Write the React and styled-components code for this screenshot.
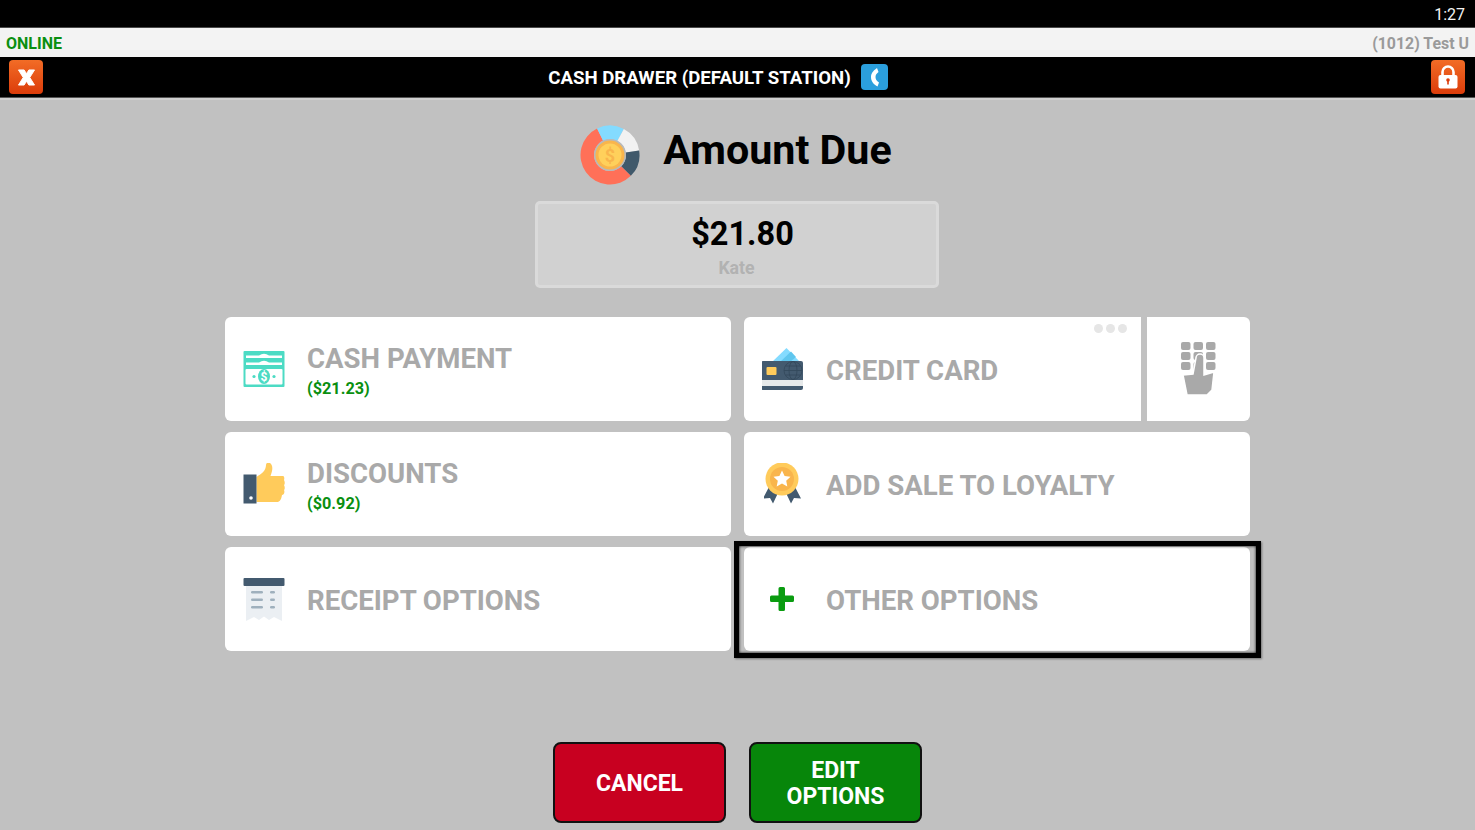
import React from 'react';
import styled, { createGlobalStyle } from 'styled-components';

const Global = createGlobalStyle`
  html, body { margin: 0; padding: 0; background: #c1c1c1; }
  * { box-sizing: border-box; }
  body { font-family: Roboto, "Liberation Sans", sans-serif; }
`;

const Page = styled.div`
  width: 1475px;
  height: 830px;
  overflow: hidden;
  display: flex;
  flex-direction: column;
  background: #c1c1c1;
`;
const StatusBar = styled.div`
  height: 28px;
  background: #000;
  border-bottom: 1px solid #4a4a4a;
  color: #f4f4f4;
  font-size: 16px;
  line-height: 29px;
  text-align: right;
  padding-right: 10px;
`;
const OnlineBar = styled.div`
  height: 29px;
  background: #f3f3f3;
  display: flex;
  align-items: center;
  justify-content: space-between;
  padding: 2px 6px 0;
  font-size: 16px;
  font-weight: 700;
`;
const Online = styled.span`
  color: #0a8f10;
`;
const User = styled.span`
  color: #9a9a9a;
  font-size: 15.9px;
`;
const TitleBar = styled.div`
  height: 41px;
  background: #000;
  border-bottom: 1px solid #555;
  display: flex;
  align-items: center;
  padding: 0 10px 0 9px;
`;
const SquareBtn = styled.div`
  width: 34px;
  height: 34px;
  border-radius: 4px;
  background: linear-gradient(#f26c26, #dc3c0a);
  display: flex;
  align-items: center;
  justify-content: center;
`;
const TitleCenter = styled.div`
  flex: 1;
  display: flex;
  align-items: center;
  justify-content: center;
  gap: 10px;
  padding-right: 38px;
  color: #fff;
  font-size: 18.65px;
  font-weight: 700;
`;
const TitleText = styled.span`
  padding-top: 2px;
`;
const Content = styled.main`
  flex: 1;
  display: flex;
  flex-direction: column;
  align-items: center;
  padding-top: 27px;
  background: linear-gradient(#cfcfcf 0 2px, #c1c1c1 2px);
`;
const Heading = styled.div`
  height: 59px;
  display: flex;
  align-items: center;
  gap: 23px;
  margin-right: 3px;
`;
const HeadingText = styled.h1`
  margin: 0 0 9px;
  font-size: 41.2px;
  font-weight: 700;
  color: #000;
  line-height: 50px;
  white-space: nowrap;
`;
const AmountBox = styled.div`
  margin-top: 17px;
  margin-right: 2px;
  width: 404px;
  height: 87px;
  border: 3px solid #dadada;
  border-radius: 5px;
  background: #d1d1d1;
  display: flex;
  flex-direction: column;
  align-items: center;
  padding-top: 9px;
`;
const Amount = styled.div`
  font-size: 32.5px;
  line-height: 42px;
  font-weight: 700;
  color: #000;
  padding-left: 12px;
`;
const Customer = styled.div`
  margin-top: 2px;
  font-size: 17.7px;
  line-height: 22px;
  font-weight: 700;
  color: #b2b2b2;
`;
const Grid = styled.div`
  margin-top: 29px;
  width: 1025px;
  display: grid;
  grid-template-columns: 506px 506px;
  grid-auto-rows: 103.5px;
  column-gap: 13px;
  row-gap: 11.5px;
`;
const Cell = styled.div`
  display: flex;
  gap: 6px;
`;
const Card = styled.div`
  position: relative;
  flex: 1;
  background: #fff;
  border-radius: ${(p) => p.$radius || '6px'};
  display: flex;
  align-items: center;
  padding-left: 18px;
  &::after {
    content: ${(p) => (p.$selected ? "''" : 'none')};
    position: absolute;
    inset: -6px -11px -7px -10px;
    border: 5px solid #000;
    box-shadow: inset 0 0 3px #000, 1px 1px 2px rgba(0, 0, 0, 0.4);
  }
`;
const KeypadCard = styled(Card)`
  flex: 0 0 103px;
  padding: 0 0 0 34px;
`;
const IconSlot = styled.div`
  width: 42px;
  height: 60px;
  margin-right: 22px;
  display: flex;
  align-items: center;
  justify-content: center;
  flex: none;
`;
const Labels = styled.div`
  display: flex;
  flex-direction: column;
  margin-top: ${(p) => (p.$sub ? '4px' : '5px')};
`;
const Label = styled.div`
  font-size: 27.6px;
  line-height: 34px;
  font-weight: 700;
  color: #a9a9a9;
  white-space: nowrap;
`;
const Sub = styled.div`
  margin-top: 3px;
  font-size: 16.3px;
  line-height: 20px;
  font-weight: 700;
  color: #0a8f10;
`;
const Dots = styled.div`
  position: absolute;
  top: 7px;
  right: 14px;
  display: flex;
  gap: 3px;
`;
const Dot = styled.span`
  width: 9px;
  height: 9px;
  border-radius: 50%;
  background: #e6e6e6;
`;
const Actions = styled.div`
  margin-top: 91px;
  display: flex;
  gap: 23px;
`;
const ActionButton = styled.button`
  width: 173px;
  height: 81px;
  border: 2px solid #111;
  border-radius: 8px;
  background: ${(p) => p.$bg};
  color: #fff;
  font-family: inherit;
  font-size: 23px;
  line-height: 26px;
  font-weight: 700;
  padding: 4px 20px 0;
`;

const XIcon = () => (
  <svg width="19" height="17" viewBox="0 0 20 18" aria-hidden="true">
    <path d="M1.500 1H7.500L10 5L12.500 1H18.500L13.500 9L18.500 17H12.500L10 13L7.500 17H1.500L6.500 9Z" fill="#fff" stroke="#fff" strokeLinejoin="round" />
  </svg>
);
const LockIcon = () => (
  <svg width="20" height="24" viewBox="0 0 20 24" aria-hidden="true">
    <path d="M4.500 11V7a5.500 5.500 0 0 1 11 0v4" fill="none" stroke="#fff" strokeWidth="2.600" />
    <rect x="0.500" y="10" width="19" height="13.500" rx="2" fill="#fff" />
    <circle cx="10" cy="15" r="1.800" fill="#dc3c0a" />
    <rect x="9.200" y="15" width="1.600" height="4.500" fill="#dc3c0a" />
  </svg>
);
const PhoneIcon = () => (
  <svg width="27" height="26" viewBox="0 0 27 26" aria-hidden="true">
    <rect width="27" height="26" rx="4" fill="#2b9fdd" />
    <path d="M16 4C11.500 7 10 10 10 13C10 17 12 20 16.500 22.500L18 18.500C15.500 17 14.500 15 14.500 13C14.500 11 15.500 9.500 17.500 8Z" fill="#fff" />
  </svg>
);

const polar = (r, deg) => {
  const a = ((deg - 90) * Math.PI) / 180;
  return [30 + r * Math.cos(a), 30 + r * Math.sin(a)];
};
const ringPath = (from, to, R, r) => {
  const [x1, y1] = polar(R, from);
  const [x2, y2] = polar(R, to);
  const [x3, y3] = polar(r, to);
  const [x4, y4] = polar(r, from);
  const large = to - from > 180 ? 1 : 0;
  return `M${x1} ${y1}A${R} ${R} 0 ${large} 1 ${x2} ${y2}L${x3} ${y3}A${r} ${r} 0 ${large} 0 ${x4} ${y4}Z`;
};
const DueIcon = () => (
  <svg width="60" height="60" viewBox="0 0 60 60" aria-hidden="true">
    <path d={ringPath(135, 334, 29.5, 16)} fill="#ff7058" />
    <path d={ringPath(-26, 28, 29.5, 16)} fill="#84dbff" />
    <path d={ringPath(28, 81, 29.5, 16)} fill="#f2f2f2" />
    <path d={ringPath(81, 135, 29.5, 16)} fill="#40596b" />
    <circle cx="30" cy="30" r="16" fill="#b9b9b9" />
    <circle cx="30" cy="30" r="14.5" fill="#f9b54c" />
    <circle cx="30" cy="30" r="11.5" fill="#ffd05b" />
    <text x="30" y="36.500" textAnchor="middle" fontSize="18" fontWeight="700" fill="#f9b54c" fontFamily="Roboto, sans-serif">$</text>
  </svg>
);
const CashIcon = () => (
  <svg width="42" height="36" viewBox="0 0 42 36" aria-hidden="true">
    <rect x="0.500" width="41" height="36" rx="1" fill="#4cdbc4" />
    <path d="M3 4.500H16Q21 1 26 4.500H39V7H3Z" fill="#fff" />
    <path d="M3 11.500H16Q21 8 26 11.500H39V14H3Z" fill="#fff" />
    <rect x="2.500" y="18" width="37" height="15.500" rx="1" fill="#fff" />
    <ellipse cx="21" cy="25.500" rx="6" ry="7.500" fill="#4cdbc4" />
    <text x="21" y="30" textAnchor="middle" fontSize="12" fontWeight="700" fill="#fff" fontFamily="Roboto, sans-serif">$</text>
    <circle cx="11" cy="25.500" r="1.600" fill="#4cdbc4" />
    <circle cx="31" cy="25.500" r="1.600" fill="#4cdbc4" />
  </svg>
);
const ThumbIcon = () => (
  <svg width="42" height="42" viewBox="0 1 42 42" aria-hidden="true">
    <path d="M13.500 15C18 12 23 9 23 3C23 1 25 0 27 1C30 3 30 8 27.500 14H40C41.500 14 41.500 17 41 18C42 20 42 22 41 23C42 25 42 27 41 28C42 30 41 33 39 33C38 39 36 40 34 40H13.500Z" fill="#ffcb5b" />
    <rect x="0.500" y="12.500" width="13" height="29" fill="#435a6f" />
    <circle cx="8" cy="36" r="1.800" fill="#fff" />
  </svg>
);
const ReceiptIcon = () => (
  <svg width="42" height="44" viewBox="0 -1 42 44" aria-hidden="true">
    <path d="M3 6H39V43L31 39L26 42L21 38.500L16 42L11 39L3 43Z" fill="#ebeff3" />
    <rect x="0.500" y="0" width="41" height="8" rx="1" fill="#435a6f" />
    <rect x="8" y="13" width="12" height="2.400" rx="1.200" fill="#9fb0bd" />
    <rect x="8" y="20.500" width="12" height="2.400" rx="1.200" fill="#9fb0bd" />
    <rect x="8" y="28" width="12" height="2.400" rx="1.200" fill="#9fb0bd" />
    <rect x="27" y="13" width="5" height="2.400" rx="1.200" fill="#9fb0bd" />
    <rect x="27" y="20.500" width="5" height="2.400" rx="1.200" fill="#9fb0bd" />
    <rect x="27" y="28" width="5" height="2.400" rx="1.200" fill="#9fb0bd" />
  </svg>
);
const CardIcon = () => (
  <svg width="42" height="42" viewBox="1 0 42 42" aria-hidden="true">
    <path d="M11 14L25.500 0L39 14Z" fill="#84dbff" />
    <path d="M19 14L30 3.500L35 9L29 14Z" fill="#5fc6ee" />
    <rect x="0" y="13" width="42" height="29" rx="2" fill="#435a6f" />
    <rect x="0" y="32" width="42" height="6" fill="#e6e9ea" />
    <rect x="5.500" y="19" width="10" height="8" rx="1" fill="#ffcb5b" />
    <circle cx="32" cy="22.500" r="9" fill="none" stroke="#32485a" strokeWidth="0.800" />
    <ellipse cx="32" cy="22.500" rx="4" ry="9" fill="none" stroke="#32485a" strokeWidth="0.800" />
    <path d="M23 22.500H41M24.500 18H39.500M24.500 27H39.500" stroke="#32485a" strokeWidth="0.800" />
  </svg>
);
const MedalIcon = () => (
  <svg width="38" height="42" viewBox="1 1 38 42" aria-hidden="true">
    <path d="M6 25L0 36.500L7 36L10 41.500L15 31Z" fill="#435a6f" />
    <path d="M32 25L38 36.500L31 36L28 41.500L23 31Z" fill="#435a6f" />
    <circle cx="19" cy="17" r="16.500" fill="#ffcb5b" />
    <circle cx="19" cy="17" r="12" fill="#f9b54c" />
    <path d="M19 8.500L21.600 14L27.500 14.700L23.200 18.700L24.300 24.500L19 21.600L13.700 24.500L14.800 18.700L10.500 14.700L16.400 14Z" fill="#fff" />
  </svg>
);
const PlusIcon = () => (
  <svg width="26" height="26" viewBox="1 0 26 26" aria-hidden="true">
    <path d="M9.500 2.500Q9.500 1 11 1H14.500Q16 1 16 2.500V9.500H23.500Q25 9.500 25 11V14.500Q25 16 23.500 16H16V23.500Q16 25 14.500 25H11Q9.500 25 9.500 23.500V16H2.500Q1 16 1 14.500V11Q1 9.500 2.500 9.500H9.500Z" fill="#0a9c10" />
  </svg>
);
const KeypadIcon = () => (
  <svg width="35" height="54" viewBox="0 0 35 54" aria-hidden="true">
    {[0, 1, 2].map((r) =>
      [0, 1, 2].map((c) => (
        <rect key={`${r}${c}`} x={c * 12.5} y={r * 10} width="9.5" height="8" rx="2" fill="#a9a9a9" />
      ))
    )}
    <path d="M15 16a4 4 0 0 1 8 0V33L33 30L31 48L26 53H6L2 33L12 32Z" fill="#a9a9a9" stroke="#fff" strokeWidth="1.500" />
  </svg>
);

const rows = [
  [{ icon: <CashIcon />, label: 'CASH PAYMENT', sub: '($21.23)' }, { icon: <CardIcon />, label: 'CREDIT CARD', keypad: true }],
  [{ icon: <ThumbIcon />, label: 'DISCOUNTS', sub: '($0.92)' }, { icon: <MedalIcon />, label: 'ADD SALE TO LOYALTY' }],
  [{ icon: <ReceiptIcon />, label: 'RECEIPT OPTIONS' }, { icon: <PlusIcon />, label: 'OTHER OPTIONS', selected: true }],
];

export default function App() {
  return (
    <Page>
      <Global />
      <StatusBar>1:27</StatusBar>
      <OnlineBar>
        <Online>ONLINE</Online>
        <User>(1012) Test U</User>
      </OnlineBar>
      <TitleBar>
        <SquareBtn><XIcon /></SquareBtn>
        <TitleCenter>
          <TitleText>CASH DRAWER (DEFAULT STATION)</TitleText>
          <PhoneIcon />
        </TitleCenter>
        <SquareBtn><LockIcon /></SquareBtn>
      </TitleBar>
      <Content>
        <Heading>
          <DueIcon />
          <HeadingText>Amount Due</HeadingText>
        </Heading>
        <AmountBox>
          <Amount>$21.80</Amount>
          <Customer>Kate</Customer>
        </AmountBox>
        <Grid>
          {rows.flat().map((item) => (
            <Cell key={item.label}>
              <Card $selected={item.selected} $radius={item.keypad ? '6px 0 0 6px' : undefined}>
                <IconSlot>{item.icon}</IconSlot>
                <Labels $sub={!!item.sub}>
                  <Label>{item.label}</Label>
                  {item.sub && <Sub>{item.sub}</Sub>}
                </Labels>
                {item.keypad && (
                  <Dots><Dot /><Dot /><Dot /></Dots>
                )}
              </Card>
              {item.keypad && (
                <KeypadCard $radius="0 6px 6px 0"><KeypadIcon /></KeypadCard>
              )}
            </Cell>
          ))}
        </Grid>
        <Actions>
          <ActionButton $bg="#c80020">CANCEL</ActionButton>
          <ActionButton $bg="#07860a">EDIT OPTIONS</ActionButton>
        </Actions>
      </Content>
    </Page>
  );
}
